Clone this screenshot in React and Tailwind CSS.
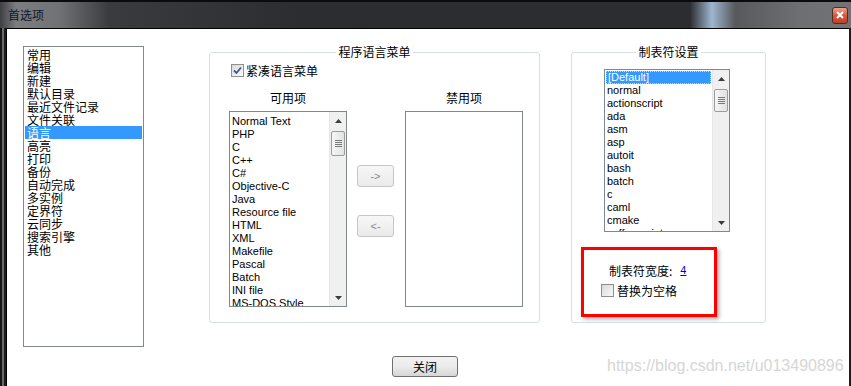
import React from 'react';

const cjk = "font-['Noto_Sans_CJK_SC','Noto_Sans_CJK_JP',sans-serif]";
const latin = "font-['Liberation_Sans',Arial,sans-serif]";

const categories = ['常用', '编辑', '新建', '默认目录', '最近文件记录', '文件关联', '语言', '高亮', '打印', '备份', '自动完成', '多实例', '定界符', '云同步', '搜索引擎', '其他'];

const languages = ['Normal Text', 'PHP', 'C', 'C++', 'C#', 'Objective-C', 'Java', 'Resource file', 'HTML', 'XML', 'Makefile', 'Pascal', 'Batch', 'INI file', 'MS-DOS Style'];

const tabLangs = ['[Default]', 'normal', 'actionscript', 'ada', 'asm', 'asp', 'autoit', 'bash', 'batch', 'c', 'caml', 'cmake', 'coffeescript'];

const Arrow = ({ down }) => (
  <svg width="7" height="4" viewBox="0 0 7 4">
    <path d={down ? 'M0 0H7L3.5 4z' : 'M3.5 0L7 4H0z'} fill="#3c3c3c" />
  </svg>
);

// vertical scrollbar, thumbClass sets thumb offset and size
const ScrollBar = ({ thumbClass }) => (
  <div className="flex w-[17px] shrink-0 flex-col border-l border-[#e6e6e6] bg-[#f0f0f0]">
    <div className="flex h-[17px] items-center justify-center">
      <Arrow />
    </div>
    <div className="flex-1">
      <div className={`mx-[1px] flex flex-col items-center justify-center gap-[1px] rounded-[2px] border border-[#9c9c9c] bg-[linear-gradient(90deg,#f6f6f6,#e2e2e2)] ${thumbClass}`}>
        <div className="h-[1px] w-[7px] bg-[#7a7a7a]" />
        <div className="h-[1px] w-[7px] bg-[#7a7a7a]" />
        <div className="h-[1px] w-[7px] bg-[#7a7a7a]" />
        <div className="h-[1px] w-[7px] bg-[#7a7a7a]" />
      </div>
    </div>
    <div className="flex h-[17px] items-center justify-center">
      <Arrow down />
    </div>
  </div>
);

const CheckBox = ({ checked }) => (
  <div className="flex h-[13px] w-[13px] shrink-0 items-center justify-center border border-[#8e8f8f] bg-[linear-gradient(135deg,#d8d8d8,#fbfbfb)]">
    {checked && (
      <svg width="9" height="9" viewBox="0 0 9 9">
        <path d="M1 4.5L3.5 7L8 1.5" fill="none" stroke="#3b5998" strokeWidth="1.8" />
      </svg>
    )}
  </div>
);

const SmallButton = ({ label }) => (
  <div className={`flex h-[22px] w-[37px] items-center justify-center rounded-[3px] border border-[#c6c6c6] bg-[linear-gradient(180deg,#f7f7f7,#eaeaea)] text-[11px] text-[#8a8a8a] ${latin}`}>
    {label}
  </div>
);

const App = () => {
  return (
    <div className="flex h-[386px] w-[851px] flex-col overflow-hidden bg-[#2b2c30]">
      {/* title bar */}
      <div className="flex h-[28px] shrink-0 items-center justify-between border-t-[2px] border-[#0b0b0b] bg-[linear-gradient(90deg,#3e3f42_0px,#7c7d81_16px,#707175_60px,#3a3b3f_110px,#2c2d31_300px,#2c2d31_690px,#9fb6d0_712px,#58595c_735px,#6e6f72_800px,#727376_851px)] pl-[8px] pr-[3px]">
        <span className={`text-[12px] leading-[14px] text-[#101828] ${cjk}`}>首选项</span>
        <div className="flex h-[17px] w-[16px] items-center justify-center rounded-[3px] border border-[#5a2a20] bg-[linear-gradient(180deg,#eba48e,#d35a3f_50%,#c0402a)]">
          <svg width="8" height="8" viewBox="0 0 8 8">
            <path d="M1 1L7 7M7 1L1 7" stroke="#ffffff" strokeWidth="2" />
          </svg>
        </div>
      </div>

      <div className="flex flex-1">
        <div className="w-[6px] border-l-[2px] border-r-[2px] border-l-[#151515] border-r-[#1c1c1c] bg-[#6a6a6a]" />

        <div className="relative flex-1 border-l border-t border-black bg-white pl-[16px] pt-[16px]">
          <div className="flex items-start">
            {/* category list */}
            <div className={`mt-[1px] h-[301px] w-[121px] shrink-0 border border-[#828790] pt-[1px] text-[12px] leading-[13px] text-black ${cjk}`}>
              {categories.map((c, i) => (
                <div key={c} className={`mx-[1px] h-[13px] pl-[2px] ${i === 6 ? 'bg-[#3399ff] text-white' : ''}`}>
                  {c}
                </div>
              ))}
            </div>

            {/* language menu group */}
            <fieldset className="ml-[65px] h-[278px] w-[331px] shrink-0 rounded-[3px] border border-[#d5dfe5]">
              <legend align="center" className={`mx-auto px-[2px] text-[12px] leading-[14px] text-black ${cjk}`}>
                程序语言菜单
              </legend>
              <div className="mt-[5px] flex items-center gap-[2px] pl-[21px]">
                <CheckBox checked />
                <span className={`text-[12px] leading-[13px] text-black ${cjk}`}>紧凑语言菜单</span>
              </div>
              <div className="mt-[14px] flex items-start pl-[19px]">
                <div className="flex w-[118px] flex-col">
                  <div className={`h-[13px] text-center text-[12px] leading-[13px] text-black ${cjk}`}>可用项</div>
                  <div className="mt-[7px] flex h-[196px] border border-[#828790]">
                    <div className={`flex-1 overflow-hidden pl-[2px] pt-[3px] text-[11px] leading-[13px] text-black ${latin}`}>
                      {languages.map((l) => (
                        <div key={l} className="h-[13px] whitespace-nowrap">{l}</div>
                      ))}
                    </div>
                    <ScrollBar thumbClass="mt-[2px] h-[25px]" />
                  </div>
                </div>
                <div className="ml-[10px] mt-[74px] flex flex-col gap-[28px]">
                  <SmallButton label="->" />
                  <SmallButton label="<-" />
                </div>
                <div className="ml-[11px] flex w-[118px] flex-col">
                  <div className={`h-[13px] text-center text-[12px] leading-[13px] text-black ${cjk}`}>禁用项</div>
                  <div className="mt-[7px] h-[196px] border border-[#828790]" />
                </div>
              </div>
            </fieldset>

            {/* tab settings group */}
            <fieldset className="ml-[31px] h-[278px] w-[195px] shrink-0 rounded-[3px] border border-[#d5dfe5]">
              <legend align="center" className={`mx-auto px-[2px] text-[12px] leading-[14px] text-black ${cjk}`}>
                制表符设置
              </legend>
              <div className="ml-[32px] mt-[10px] flex h-[163px] w-[126px] border border-[#828790]">
                <div className={`flex-1 overflow-hidden pt-[1px] text-[11px] leading-[13px] text-black ${latin}`}>
                  {tabLangs.map((t, i) => (
                    <div
                      key={t}
                      className={`mx-[1px] h-[13px] whitespace-nowrap pl-[1px] ${i === 0 ? 'border border-dotted border-[#f5d48a] bg-[#3399ff] leading-[11px] text-white' : ''}`}
                    >
                      {t}
                    </div>
                  ))}
                </div>
                <ScrollBar thumbClass="mt-[2px] h-[23px]" />
              </div>

              <div className="ml-[9px] mt-[15px] h-[70px] w-[136px] border-[3px] border-[#ff0000] shadow-[2px_2px_4px_rgba(0,0,0,0.35)]">
                <div className={`mt-[14px] flex items-center pl-[25px] text-[12px] leading-[13px] text-black ${cjk}`}>
                  <span>制表符宽度:</span>
                  <span className={`ml-[8px] text-[11px] text-[#0000ee] underline ${latin}`}>4</span>
                </div>
                <div className="mt-[7px] flex items-center gap-[3px] pl-[17px]">
                  <CheckBox />
                  <span className={`text-[12px] leading-[13px] text-black ${cjk}`}>替换为空格</span>
                </div>
              </div>
            </fieldset>
          </div>

          <div className="ml-[369px] mt-[9px] flex">
            <div className={`flex h-[21px] w-[66px] items-center justify-center rounded-[3px] border border-[#707070] bg-[linear-gradient(180deg,#f2f2f2,#ebebeb_50%,#d6d6d6)] text-[12px] text-black ${cjk}`}>
              关闭
            </div>
          </div>

          <span className={`absolute left-[600px] top-[328px] text-[16px] leading-[18px] text-[#d6d6d6] ${latin}`}>
            https://blog.csdn.net/u013490896
          </span>
        </div>

        <div className="w-[2px] bg-[#1c1c1c]" />
      </div>
    </div>
  );
};

export default App;
